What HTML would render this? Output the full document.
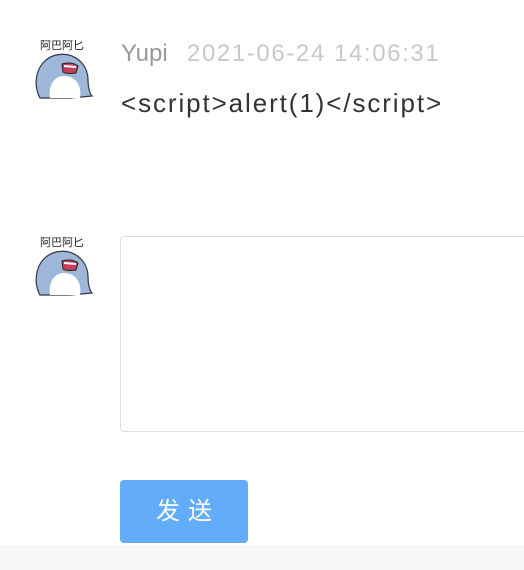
<!DOCTYPE html>
<html><head><meta charset="utf-8"><style>
body{margin:0;width:524px;height:570px;background:#fff;position:relative;overflow:hidden;font-family:"Liberation Sans","Noto Sans CJK SC",sans-serif}
.av{position:absolute;left:30px;width:64px;height:64px}
.name{position:absolute;left:121px;top:40px;font-size:24px;color:#999;white-space:nowrap}
.time{color:#c8c8c8;position:absolute;left:66px;letter-spacing:1.6px}
.msg{position:absolute;left:121px;top:88px;font-size:26px;color:#333;letter-spacing:1.9px;white-space:nowrap}
.ta{position:absolute;left:120px;top:236px;width:420px;height:194px;border:1px solid #dcdfe6;border-radius:4px}
.btn{position:absolute;left:120px;top:480px;width:128px;height:63px;background:#63acf9;border-radius:4px;color:#fff;font-size:24px;text-align:center;line-height:63px;letter-spacing:8px;text-indent:8px}
.foot{position:absolute;left:0;top:545px;width:524px;height:25px;background:#f7f7f7}
</style></head><body>
<svg class="av" style="top:36px" viewBox="0 0 64 64"><text x="10" y="13" font-size="11" fill="#222" font-family="Noto Sans CJK SC">阿巴阿匕</text><path d="M10 62 C2 48 6 24 26 19 C44 15 58 28 58 44 C58 52 60 58 62 60 L40 62 Z" fill="#9fb8da" stroke="#334" stroke-width="1.2"/><path d="M20 62 C18 50 24 40 34 40 C46 40 52 50 50 62 Z" fill="#fff"/><path d="M32 28 C38 26 44 27 48 30 L46 37 C40 38 36 38 33 36 Z" fill="#c2405a" stroke="#222"/><path d="M34 30 L46 31" stroke="#fff" stroke-width="2"/></svg>
<div class="name">Yupi<span class="time">2021-06-24 14:06:31</span></div>
<div class="msg">&lt;script&gt;alert(1)&lt;/script&gt;</div>
<svg class="av" style="top:233px" viewBox="0 0 64 64"><text x="10" y="13" font-size="11" fill="#222" font-family="Noto Sans CJK SC">阿巴阿匕</text><path d="M10 62 C2 48 6 24 26 19 C44 15 58 28 58 44 C58 52 60 58 62 60 L40 62 Z" fill="#9fb8da" stroke="#334" stroke-width="1.2"/><path d="M20 62 C18 50 24 40 34 40 C46 40 52 50 50 62 Z" fill="#fff"/><path d="M32 28 C38 26 44 27 48 30 L46 37 C40 38 36 38 33 36 Z" fill="#c2405a" stroke="#222"/><path d="M34 30 L46 31" stroke="#fff" stroke-width="2"/></svg>
<div class="ta"></div>
<div class="btn">发送</div>
<div class="foot"></div>
</body></html>
